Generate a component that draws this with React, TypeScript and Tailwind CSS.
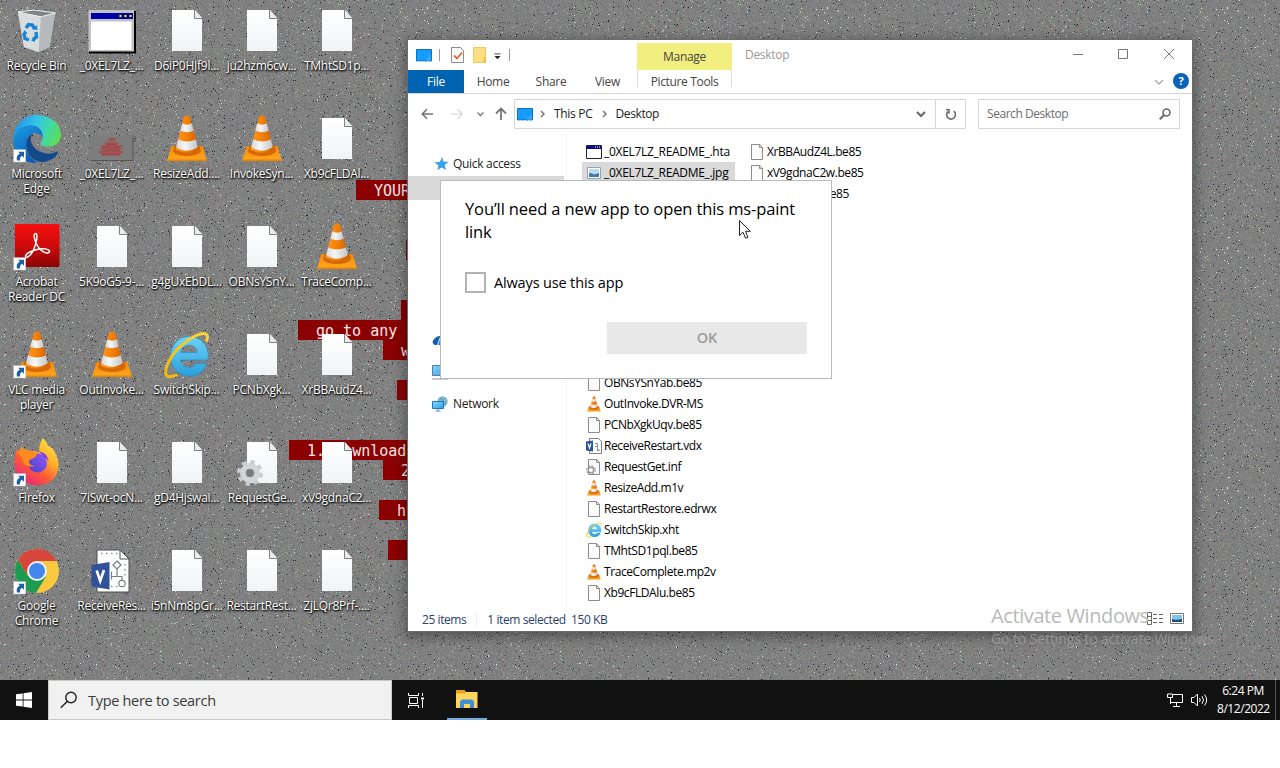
import React from "react";

type Kind = "doc" | "cone" | "hta" | "jpg" | "ie" | "visio" | "inf";

/* ---------- wallpaper ---------- */

const TILE_W = 400;
const TILE_H = 240;

function makeNoise() {
  let seed = 20220812;
  const rnd = () => {
    seed = (seed + 0x6d2b79f5) | 0;
    let t = Math.imul(seed ^ (seed >>> 15), 1 | seed);
    t = (t + Math.imul(t ^ (t >>> 7), 61 | t)) ^ t;
    return ((t ^ (t >>> 14)) >>> 0) / 4294967296;
  };
  const palette: [string, number][] = [
    ["#787878", 16000],
    ["#898989", 16000],
    ["#6c6f70", 4500],
    ["#92928e", 4500],
    ["#202026", 700],
    ["#3c3c5c", 420],
    ["#44594a", 420],
    ["#5f4444", 420],
    ["#dcdcdc", 420],
    ["#c2c296", 420],
    ["#94c0b2", 420],
    ["#b096b0", 420],
    ["#9a6262", 420],
    ["#66749f", 420],
    ["#6c9c76", 420],
  ];
  return palette.map(([color, count]) => {
    let d = "";
    for (let i = 0; i < count; i++) {
      d += `M${Math.floor(rnd() * TILE_W)} ${Math.floor(rnd() * TILE_H)}h1v1h-1z`;
    }
    return { color, d };
  });
}

const NOISE = makeNoise();

function Wallpaper() {
  return (
    <svg className="absolute inset-0" width="1280" height="680" shapeRendering="crispEdges">
      <defs>
        <pattern id="noise" width={TILE_W} height={TILE_H} patternUnits="userSpaceOnUse">
          <rect width={TILE_W} height={TILE_H} fill="#808080" />
          {NOISE.map((n) => (
            <path key={n.color} d={n.d} fill={n.color} />
          ))}
        </pattern>
      </defs>
      <rect width="1280" height="680" fill="url(#noise)" />
    </svg>
  );
}

const STRIPS: { pos: string; text: string }[] = [
  { pos: "left-[356px] top-[180px] w-[60px]", text: "YOUR" },
  { pos: "left-[406px] top-[240px] w-[10px]", text: "" },
  { pos: "left-[401px] top-[300px] w-[10px]", text: "" },
  { pos: "left-[298px] top-[320px] w-[118px]", text: "go to any d" },
  { pos: "left-[383px] top-[340px] w-[30px]", text: "w" },
  { pos: "left-[397px] top-[380px] w-[15px]", text: "" },
  { pos: "left-[289px] top-[440px] w-[125px]", text: "1. Download" },
  { pos: "left-[383px] top-[460px] w-[30px]", text: "2" },
  { pos: "left-[379px] top-[500px] w-[40px]", text: "ht" },
  { pos: "left-[388px] top-[540px] w-[30px]", text: "l" },
];

/* ---------- icons ---------- */

function Gradients() {
  return (
    <svg width="0" height="0" className="absolute">
      <defs>
        <linearGradient id="page" x1="0" y1="0" x2="0" y2="1">
          <stop offset="0" stopColor="#ffffff" />
          <stop offset="1" stopColor="#f1f3f5" />
        </linearGradient>
        <linearGradient id="orange" x1="0" x2="1">
          <stop offset="0" stopColor="#ff9a2a" />
          <stop offset=".45" stopColor="#f78408" />
          <stop offset="1" stopColor="#cf5f00" />
        </linearGradient>
        <linearGradient id="white" x1="0" x2="1">
          <stop offset="0" stopColor="#d5d8da" />
          <stop offset=".4" stopColor="#f6f8f8" />
          <stop offset="1" stopColor="#bfc4c8" />
        </linearGradient>
        <linearGradient id="base" x1="0" y1="0" x2="0" y2="1">
          <stop offset="0" stopColor="#f58a0a" />
          <stop offset="1" stopColor="#ffa621" />
        </linearGradient>
        <linearGradient id="acro" x1="0" y1="0" x2="0" y2="1">
          <stop offset="0" stopColor="#f50f0f" />
          <stop offset=".5" stopColor="#cf0a0a" />
          <stop offset="1" stopColor="#8a0505" />
        </linearGradient>
        <linearGradient id="iefill" x1="0" y1="0" x2="0" y2="1">
          <stop offset="0" stopColor="#6fd3f7" />
          <stop offset="1" stopColor="#2aa0dd" />
        </linearGradient>
        <linearGradient id="ring" x1="0" y1="1" x2="1" y2="0">
          <stop offset="0" stopColor="#f2b90c" />
          <stop offset="1" stopColor="#fbd436" />
        </linearGradient>
        <linearGradient id="edgeTop" x1="0" y1=".3" x2="1" y2=".6">
          <stop offset="0" stopColor="#1f8fdd" />
          <stop offset=".4" stopColor="#34c3ee" />
          <stop offset=".7" stopColor="#3fd8a8" />
          <stop offset="1" stopColor="#5fdc55" />
        </linearGradient>
        <linearGradient id="edgeMid" x1="0" y1="0" x2="0.6" y2="1">
          <stop offset="0" stopColor="#1b9de2" />
          <stop offset="1" stopColor="#0c59b8" />
        </linearGradient>
        <linearGradient id="fox" x1=".9" y1="0" x2=".2" y2="1">
          <stop offset="0" stopColor="#ffe84a" />
          <stop offset=".35" stopColor="#ffb52a" />
          <stop offset=".65" stopColor="#ff5a36" />
          <stop offset="1" stopColor="#e3208a" />
        </linearGradient>
        <linearGradient id="foxBlob" x1="1" y1="0" x2="0" y2="1">
          <stop offset="0" stopColor="#9059ff" />
          <stop offset="1" stopColor="#4a3fc4" />
        </linearGradient>
        <linearGradient id="screen" x1="0" y1="0" x2="1" y2="1">
          <stop offset="0" stopColor="#8bd4ff" />
          <stop offset="1" stopColor="#2f9fe8" />
        </linearGradient>
      </defs>
    </svg>
  );
}

function Page() {
  return (
    <g>
      <path d="M9 3h23l7 8v33H9z" fill="url(#page)" />
      <path d="M31.500 3v8.500h8z" fill="#e9ebec" />
      <path d="M31.500 3v8.500h8" fill="none" stroke="#7d8082" strokeWidth="1" />
    </g>
  );
}

function Cone() {
  return (
    <g>
      <path d="M8.500 31h31l4.500 15H4z" fill="url(#base)" />
      <path d="M4 44.600h40l.3 1.500H3.700z" fill="#e88600" />
      <path d="M10 36.500C14 42.500 34 42.500 38 36.500L36.500 30.500h-25z" fill="#c85a00" opacity=".75" />
      <path d="M21 1.500Q24 -.5 27 1.500L35.500 34.500Q24 41 12.500 34.500z" fill="url(#orange)" />
      <path d="M19.200 8.600Q24 10.800 28.800 8.600L30.700 15.800Q24 18.600 17.300 15.800z" fill="url(#white)" />
      <path d="M15.200 24.500Q24 28.500 32.800 24.500L34.800 32Q24 39.500 13.200 32z" fill="url(#white)" />
    </g>
  );
}

function IE() {
  return (
    <g>
      <path
        d="M25.500 5.500C15.500 5.500 7.500 14 7.500 25S15 45 26 45c9 0 15-4.500 17.700-12.500H32.700c-1.200 2.600-3.500 4-6.500 4-4.800 0-8-2.900-8.400-7.500H45.300C46.500 14.500 38 5.500 25.500 5.500zM17.800 21.500c.9-4.400 3.900-7.200 8.400-7.200 4.600 0 7.500 2.700 8.100 7.200z"
        fill="url(#iefill)"
        stroke="#1d8fce"
        strokeWidth=".6"
      />
      <path
        d="M14.500 43.500C9 46.500 4 46.500 3 43.500 1 37 8.500 22.500 19.500 13.500 28.500 5.500 40 .5 43.500 3.500c1.700 1.600.8 4.500-.5 7"
        fill="none"
        stroke="url(#ring)"
        strokeWidth="3"
      />
    </g>
  );
}

function Visio() {
  return (
    <g>
      <path d="M9 3h23l9 9v33H9z" fill="#fff" stroke="#4a4f55" strokeWidth="1" />
      <path d="M32 3v9h9z" fill="#fff" stroke="#4a4f55" strokeWidth="1" />
      <path
        d="M13 6.500h17M23 39.500h8M37 17v15"
        stroke="#8d929b"
        strokeWidth="1.500"
        strokeDasharray="1.500 3.500"
      />
      <path d="M29 14l4 4-4 4-4-4zM29 22v7M23.500 24.500v8M23.500 29.500H34v4" fill="none" stroke="#777d86" strokeWidth="1.200" />
      <circle cx="34" cy="36.500" r="3.200" fill="#fff" stroke="#777d86" strokeWidth="1.200" />
      <path d="M3.500 18L21.500 15v27.500L3.500 39.500z" fill="#2f529b" />
      <path d="M8.700 23.500l3.500 10.500 3.800-11" fill="none" stroke="#fff" strokeWidth="2.600" />
    </g>
  );
}

function Gear() {
  return (
    <g>
      <circle cx="12" cy="34" r="7" fill="none" stroke="#d3d6d9" strokeWidth="6" />
      <circle cx="12" cy="34" r="11" fill="none" stroke="#c9cdd0" strokeWidth="4" strokeDasharray="4.320 4.320" />
      <circle cx="12" cy="34" r="4" fill="#77797b" stroke="#8a9096" strokeWidth="1" />
    </g>
  );
}

function Shortcut() {
  return (
    <g>
      <rect x=".7" y="34.700" width="12" height="12.300" fill="#fff" stroke="#c9c9c9" strokeWidth=".5" />
      <path d="M5 36.700h6v6l-2-2c-1.600 1-2.300 2.600-1.900 4.800H4c-1-3.200.2-5.700 2.900-7z" fill="#1f5fa8" />
    </g>
  );
}

function Hta() {
  return (
    <g>
      <path d="M1 4h47v42.500H1z" fill="#000" />
      <path d="M.5 3h45.500v41.500H.5z" fill="#c3c3c3" />
      <path d="M3 6h42v6H3z" fill="#0000a8" />
      <path d="M31 7.500h3v3h-3zM36 7.500h3v3h-3zM41 7.500h3v3h-3z" fill="#d6d6d6" stroke="#000" strokeWidth=".7" />
      <path d="M3 14.500h40.500V43H3z" fill="#fff" />
    </g>
  );
}

function Thumb() {
  return (
    <g>
      <path d="M3 21.500h42.500V46H3z" fill="#555" />
      <path d="M2.500 21h42v24h-42z" fill="#7d7d7d" />
      <path d="M20 25h8M17 28h13M13.500 31h21M12.500 34h21M10.500 37h25M14 40h18" stroke="#a4494b" strokeWidth="1.500" />
      <path d="M22 23.500h5M18 29.500h11M15 35.500h17M13 38.500h20M14 32.500h18" stroke="#ad4043" strokeWidth="1" />
    </g>
  );
}

function Bin() {
  return (
    <g>
      <path d="M5 5l23 4.500L42 6l-5.500 34L25.500 45 11 40z" fill="#cfd3d5" />
      <path d="M5 5l23 4.500-2.500 35.500L11 40z" fill="#d9dcdd" />
      <path d="M28 9.500L42.500 6 36.500 40l-11 5z" fill="#b6babd" />
      <path d="M5 5l16-2 21.500 3L28 9.800z" fill="#7e8385" stroke="#eef0f1" strokeWidth="1" />
      <path
        d="M13 21l2.500-3.500 4 .5 2 4M23 25l.5 5-3.500 2.500M16 33l-4-1.500-1-5"
        fill="none"
        stroke="#1784d8"
        strokeWidth="3.400"
      />
      <path d="M19 22l5.500 1-.5-5zM21.500 29.500l-3.500 4 4 1.500zM9 28l2.500-5 3 3.500z" fill="#1784d8" />
    </g>
  );
}

function Edge() {
  return (
    <g>
      <path d="M.3 24C1 10 11-.3 24 0c14 .3 24 9 24 19.500 0 8-6 12.300-12.500 12.300-5 0-8.200-1.600-8-3.700.1-1 2.400-2 2.400-5.300C29.900 17 24 13 17.500 13 9 13 2.500 17 .3 24z" fill="url(#edgeTop)" />
      <path d="M.3 24C2 14.500 10.500 9.500 19 10.300c7 .7 11.300 6 10.800 12-2-3-5.800-5-9.500-4-5.500 1.600-7.800 7-7 13C14.500 40 20 45.500 25 47.700 11 49-.8 38 .3 24z" fill="url(#edgeMid)" />
      <path d="M20.300 18.300C15 20.500 12.500 26 13.300 31.500c1.300 9.500 9 16 17 15.500 6.700-.5 12-4.500 14.500-9 .8-1.400-.6-1.700-1.500-1.200-3 1.600-6.500 2.400-10 1.800-8.500-1.200-14.500-6.800-15.500-13-.4-3 .5-5.600 2.500-7.300z" fill="#114a8b" />
    </g>
  );
}

function Acrobat() {
  return (
    <g>
      <path d="M2 1h44.500v43H2z" fill="url(#acro)" />
      <path
        d="M22.700 10.500c-2.600 0-1.700 6 1.300 11.500 3.200 5.800 8 8.800 11.200 7.700 3.200-1.200.3-4.200-6-3.900C22.500 26.200 13 29.500 12.500 33.300c-.3 2.800 4.200 1 7.800-6C23.500 20.500 25.300 10.500 22.700 10.500z"
        fill="none"
        stroke="#fff"
        strokeWidth="1.500"
      />
    </g>
  );
}

function Firefox() {
  return (
    <g>
      <path
        d="M30-.7c2.500 2 4 4.500 5 7.500 4 1.500 6 4 7.500 8C45 19.500 46.500 24 45 31 43 40.500 34.500 46.300 24.500 46.300 12 46.300 1.500 37.500 1.300 24.500 1.200 19 3 14 3.500 10.500L6 13 8.500 7.500c2 2.500 5 4 8.500 4l9.500 1.500C25.500 7.500 27.500 2.500 30-.7z"
        fill="url(#fox)"
      />
      <circle cx="24.500" cy="24" r="9.500" fill="url(#foxBlob)" />
      <path d="M3.500 10.500L6 13 8.500 7.500c2.500 3 5.500 4.300 9 4.500 4.500.3 6.500 2.500 6 4.500-1.500 3.500-7.500 3-7.500 6.500 0 2.500 3 3.500 6 4-4 1.500-11 .5-12.500-6C8.500 16 4 14.500 3.500 10.500z" fill="#ff8a1f" />
      <path d="M24 12.500c6 0 11 3 11.500 10-1.500-3-3.500-4-5-4.500-1-3-3.500-4.500-6.500-5.500z" fill="#7a3fe0" />
    </g>
  );
}

function Chrome() {
  return (
    <g>
      <circle cx="24" cy="24" r="22" fill="#fbc840" />
      <path d="M4.950 13A22 22 0 0 1 43.500 14H24L15 29z" fill="#d8453a" />
      <path d="M4.950 13A22 22 0 0 0 23 46L33 29.500 24 30 15 29z" fill="#1d9b52" />
      <circle cx="24" cy="24" r="10" fill="#f3f3f3" />
      <circle cx="24" cy="24" r="8" fill="#4286ee" />
    </g>
  );
}

const BIG: Record<string, React.ReactNode> = {
  bin: <Bin />,
  doc: <Page />,
  cone: <Cone />,
  hta: <Hta />,
  thumb: <Thumb />,
  edge: <Edge />,
  acrobat: <Acrobat />,
  ie: <IE />,
  visio: <Visio />,
  firefox: <Firefox />,
  chrome: <Chrome />,
  inf: (
    <g>
      <Page />
      <Gear />
    </g>
  ),
};

interface DeskItem {
  icon: string;
  label: string;
  link?: boolean;
}

const DESK: DeskItem[] = [
  { icon: "bin", label: "Recycle Bin" },
  { icon: "hta", label: "_0XEL7LZ_..." },
  { icon: "doc", label: "D6iP0HJf9l..." },
  { icon: "doc", label: "ju2hzm6cw..." },
  { icon: "doc", label: "TMhtSD1p..." },
  { icon: "edge", label: "Microsoft\nEdge", link: true },
  { icon: "thumb", label: "_0XEL7LZ_..." },
  { icon: "cone", label: "ResizeAdd...." },
  { icon: "cone", label: "InvokeSyn..." },
  { icon: "doc", label: "Xb9cFLDAl..." },
  { icon: "acrobat", label: "Acrobat\nReader DC", link: true },
  { icon: "doc", label: "5K9oG5-9-..." },
  { icon: "doc", label: "g4gUxEbDL..." },
  { icon: "doc", label: "OBNsYSnY..." },
  { icon: "cone", label: "TraceComp..." },
  { icon: "cone", label: "VLC media\nplayer", link: true },
  { icon: "cone", label: "OutInvoke..." },
  { icon: "ie", label: "SwitchSkip..." },
  { icon: "doc", label: "PCNbXgk..." },
  { icon: "doc", label: "XrBBAudZ4..." },
  { icon: "firefox", label: "Firefox", link: true },
  { icon: "doc", label: "7iSwt-ocN..." },
  { icon: "doc", label: "gD4Hjswai..." },
  { icon: "inf", label: "RequestGe..." },
  { icon: "doc", label: "xV9gdnaC2..." },
  { icon: "chrome", label: "Google\nChrome", link: true },
  { icon: "visio", label: "ReceiveRes..." },
  { icon: "doc", label: "i5nNm8pGr..." },
  { icon: "doc", label: "RestartRest..." },
  { icon: "doc", label: "ZjLQr8Prf-...." },
];

function DesktopIcon({ item }: { item: DeskItem }) {
  return (
    <div className="flex h-[108px] w-[75px] flex-col items-center">
      <svg className="-ml-px h-12 w-12 shrink-0 overflow-visible" viewBox="0 0 48 48">
        {BIG[item.icon]}
        {item.link && <Shortcut />}
      </svg>
      <div className="mt-[3px] -ml-[2px] text-center text-[12px] leading-[15px] tracking-[-0.25px] whitespace-pre text-white [text-shadow:1px_1px_2px_#000,0_1px_2px_#000]">
        {item.label}
      </div>
    </div>
  );
}

function SmallIcon({ kind }: { kind: Kind }) {
  if (kind === "doc")
    return (
      <svg width="16" height="16" viewBox="0 0 16 16" className="shrink-0">
        <path d="M2.500.5h8l3 3v12h-11z" fill="#fcfcfc" stroke="#8c8c8c" />
        <path d="M10.500.5v3h3" fill="none" stroke="#8c8c8c" />
      </svg>
    );
  if (kind === "hta")
    return (
      <svg width="16" height="16" viewBox="0 0 16 16" className="shrink-0">
        <path d="M.5 1.500h15v13H.5z" fill="#fff" stroke="#222" />
        <path d="M1 2h14v3H1z" fill="#0a0a9a" />
        <path d="M9 3h1M11 3h1M13 3h1" stroke="#fff" />
      </svg>
    );
  if (kind === "jpg")
    return (
      <svg width="16" height="16" viewBox="0 0 16 16" className="shrink-0">
        <path d="M1.500 2.500h13v11h-13z" fill="#fff" stroke="#8fa3b3" />
        <path d="M3 4h10v8H3z" fill="#b9dcf0" />
        <path d="M3 8.500l2-.5 3 1.500 5-1.500v4H3z" fill="#3f7ba8" />
      </svg>
    );
  if (kind === "inf")
    return (
      <svg width="16" height="16" viewBox="0 0 16 16" className="shrink-0">
        <path d="M2.500.5h8l3 3v12h-11z" fill="#fcfcfc" stroke="#8c8c8c" />
        <path d="M10.500.5v3h3" fill="none" stroke="#8c8c8c" />
        <circle cx="5" cy="11" r="2.700" fill="#fff" stroke="#999" strokeWidth="1.400" />
        <circle cx="5" cy="11" r="4.200" fill="none" stroke="#999" strokeWidth="1.400" strokeDasharray="1.600 1.700" />
      </svg>
    );
  if (kind === "visio")
    return (
      <svg width="16" height="16" viewBox="0 0 16 16" className="shrink-0">
        <path d="M3.500.5h9l3 3v12h-12z" fill="#fff" stroke="#7b8087" />
        <path d="M9 5.500h2.500v3H9M11.500 8.500V12H14M11 12.500h2" fill="none" stroke="#8a9099" />
        <path d="M0 3.500L7 2.500v11L0 12.500z" fill="#2f529b" />
        <path d="M2 5.500l1.500 4.500L5 5.500" fill="none" stroke="#fff" strokeWidth="1.200" />
      </svg>
    );
  return (
    <svg width="16" height="16" viewBox="0 0 48 48" className="shrink-0">
      {kind === "cone" ? <Cone /> : <IE />}
    </svg>
  );
}

function Monitor() {
  return (
    <svg width="16" height="13" viewBox="0 0 16 13" className="shrink-0">
      <path d="M.5.5h15v11.500H.5z" fill="#189cff" stroke="#0c6fbd" />
      <path d="M2 12.500h3M6 12.500h3M11 12.500h2" stroke="#bfe0f6" />
      <path d="M9.500 11.500l5.500-6v6z" fill="#35adff" />
    </svg>
  );
}

/* ---------- explorer window ---------- */

const COL1: { kind: Kind; name: string; selected?: boolean }[] = [
  { kind: "hta", name: "_0XEL7LZ_README_.hta" },
  { kind: "jpg", name: "_0XEL7LZ_README_.jpg", selected: true },
];
const COL1_REST: { kind: Kind; name: string }[] = [
  { kind: "doc", name: "OBNsYSnYab.be85" },
  { kind: "cone", name: "OutInvoke.DVR-MS" },
  { kind: "doc", name: "PCNbXgkUqv.be85" },
  { kind: "visio", name: "ReceiveRestart.vdx" },
  { kind: "inf", name: "RequestGet.inf" },
  { kind: "cone", name: "ResizeAdd.m1v" },
  { kind: "doc", name: "RestartRestore.edrwx" },
  { kind: "ie", name: "SwitchSkip.xht" },
  { kind: "doc", name: "TMhtSD1pql.be85" },
  { kind: "cone", name: "TraceComplete.mp2v" },
  { kind: "doc", name: "Xb9cFLDAlu.be85" },
];
const COL2: { kind: Kind; name: string }[] = [
  { kind: "doc", name: "XrBBAudZ4L.be85" },
  { kind: "doc", name: "xV9gdnaC2w.be85" },
  { kind: "doc", name: "ZjLQr8Prf-.be85" },
];

function FileRow({ kind, name, selected }: { kind: Kind; name: string; selected?: boolean }) {
  return (
    <div
      className={
        selected
          ? "flex h-[21px] w-[153px] items-center gap-[2px] bg-[#d9d9d9] pl-1"
          : "flex h-[21px] w-[153px] items-center gap-[2px] pl-1"
      }
    >
      <SmallIcon kind={kind} />
      <span
        className={
          name.startsWith("_")
            ? "whitespace-nowrap tracking-[-0.3px]"
            : "whitespace-nowrap tracking-[-0.42px]"
        }
      >
        {name}
      </span>
    </div>
  );
}

function TitleBar() {
  return (
    <div className="flex h-[30px] items-start">
      <div className="flex h-[30px] w-[229px] items-center pl-2">
        <Monitor />
        <div className="ml-[7px] h-3 w-px bg-[#999]" />
        <svg width="13" height="16" viewBox="0 0 13 16" className="ml-[11px]">
          <path d="M.5.5h9l3 3v12H.5z" fill="#fff" stroke="#8b8b8b" />
          <path d="M3 8.500l3 3 5-6" fill="none" stroke="#e0692b" strokeWidth="1.800" />
        </svg>
        <svg width="14" height="16" viewBox="0 0 14 16" className="ml-[9px]">
          <path d="M.5.5h12v15H.5z" fill="#fddf83" stroke="#efc95c" />
          <path d="M10.500 15.500v-5l2-1.500v6.500z" fill="#f0bf45" />
        </svg>
        <svg width="7" height="7" viewBox="0 0 8 7" className="ml-[7px] mt-[3px]">
          <path d="M.5.5h7" stroke="#333" />
          <path d="M.5 3h7L4 6.500z" fill="#222" />
        </svg>
        <div className="ml-[8px] h-3 w-px bg-[#999]" />
      </div>
      <div className="mt-[3px] flex h-[27px] w-[95px] items-center justify-center bg-[#f1ef80] pt-px text-[#444]">
        Manage
      </div>
      <div className="ml-[13px] flex h-[30px] grow items-center text-[#999]">Desktop</div>
      <svg width="110" height="30" viewBox="0 0 110 30" className="mr-4" fill="none" stroke="#777">
        <path d="M7 14.500h10" />
        <path d="M52.500 9.500h9v9h-9z" />
        <path d="M98 9l10 10M108 9l-10 10" />
      </svg>
    </div>
  );
}

function Tabs() {
  return (
    <div className="flex h-6 items-stretch border-b border-[#d6d6d6] text-[#444]">
      <div className="flex w-14 items-center justify-center bg-[#0063b1] pt-px text-white">File</div>
      <div className="flex w-[58px] items-center justify-center pt-px">Home</div>
      <div className="flex w-[58px] items-center justify-center pt-px">Share</div>
      <div className="flex w-[57px] items-center justify-center pt-px pr-[2px]">View</div>
      <div className="flex h-[17px] w-[95px] shrink-0 items-center justify-center self-start border-x border-[#ddd] whitespace-nowrap">
        <span className="pt-[7px] tracking-[-0.35px]">Picture Tools</span>
      </div>
      <div className="grow" />
      <div className="flex items-center gap-[9px] pr-[3px]">
        <svg width="10" height="6" viewBox="0 0 10 6" fill="none" stroke="#aaa" strokeWidth="1.400">
          <path d="M1 1l4 4 4-4" />
        </svg>
        <div className="-mt-px flex h-4 w-4 items-center justify-center rounded-full bg-[#0a63b8] text-[11px] font-bold text-white">
          ?
        </div>
      </div>
    </div>
  );
}

function AddressBar() {
  return (
    <div className="flex h-10 items-center pl-[13px] text-[#222]">
      <svg width="90" height="20" viewBox="0 0 90 20" fill="none" strokeWidth="1.600">
        <path d="M12 10H1.500M6 5.200L1.200 10 6 14.800" stroke="#767676" />
        <path d="M30 10h11M36.500 5.200L41.300 10l-4.800 4.800" stroke="#d4d4d4" strokeWidth="1.200" />
        <path d="M56.500 8.500l3 3 3-3" stroke="#888" />
        <path d="M80 16V4.500M75 9.500l5-5 5 5" stroke="#767676" strokeWidth="1.800" />
      </svg>
      <div className="ml-[3px] flex h-[30px] w-[452px] items-stretch border border-[#d6d6d6]">
        <div className="flex grow items-center pl-[2px]">
          <Monitor />
          <svg width="5" height="8" viewBox="0 0 5 8" className="ml-[7px]" fill="none" stroke="#777" strokeWidth="1.500">
            <path d="M1 1l3 3-3 3" />
          </svg>
          <span className="ml-[9px]">This PC</span>
          <svg width="5" height="8" viewBox="0 0 5 8" className="ml-[9px]" fill="none" stroke="#777" strokeWidth="1.500">
            <path d="M1 1l3 3-3 3" />
          </svg>
          <span className="ml-[9px] grow tracking-[-0.4px]">Desktop</span>
          <svg width="10" height="7" viewBox="0 0 10 7" className="mr-[9px]" fill="none" stroke="#666" strokeWidth="2">
            <path d="M1 1l4 4 4-4" />
          </svg>
        </div>
        <div className="flex w-[30px] items-center justify-center border-l border-[#d6d6d6]">
          <svg width="12" height="13" viewBox="0 0 12 13" fill="none" stroke="#6a6a6a" strokeWidth="1.600">
            <path d="M8.700 3.200A4.400 4.400 0 1 1 3 3.500" />
            <path d="M1 1.500l3 .3-.2 4" />
          </svg>
        </div>
      </div>
      <div className="ml-3 flex h-[30px] w-[202px] items-center border border-[#d6d6d6] pr-2 pl-2 tracking-[-0.45px] text-[#6d6d6d]">
        <span className="grow">Search Desktop</span>
        <svg width="12" height="12" viewBox="0 0 12 12" fill="none" stroke="#666" strokeWidth="1.600">
          <circle cx="7.500" cy="4.500" r="3.500" />
          <path d="M5 7L.8 11.200" strokeWidth="2" />
        </svg>
      </div>
    </div>
  );
}

function NavPane() {
  return (
    <div className="flex w-[159px] flex-col border-r border-[#f4f4f4] text-[#222]">
      <div className="mt-[18px] flex h-6 items-center pl-[26px]">
        <svg width="15" height="14" viewBox="0 0 16 15">
          <path d="M8.500 0l1.800 5 5.200.2-4 3.500 1.300 5.300-4.500-2.800L3.500 14l1.300-5L.5 5.700l5.700-.3z" fill="#3aa0e8" />
        </svg>
        <span className="ml-1">Quick access</span>
      </div>
      <div className="h-6 w-[156px] bg-[#d9d9d9]" />
      <div className="mt-[128px] flex h-6 items-center pl-6">
        <svg width="16" height="10" viewBox="0 0 16 10">
          <path d="M3 10a3 3 0 0 1-1-5.500Q4 1 8 1v1L5 10z" fill="#0f5fb0" />
          <path d="M6 10L8.500 3 13 3a3.500 3.500 0 0 1 0 7z" fill="#1a82dc" />
        </svg>
      </div>
      <div className="mt-2 flex h-6 items-center pl-6">
        <svg width="16" height="16" viewBox="0 0 16 16">
          <path d="M.5 1.500h15v10H.5z" fill="url(#screen)" stroke="#5a7f9b" />
          <path d="M0 15h16" stroke="#8b979f" />
        </svg>
      </div>
      <div className="mt-2 flex h-6 items-center pl-6">
        <svg width="16" height="16" viewBox="0 0 16 16">
          <circle cx="10.500" cy="5.500" r="5.200" fill="#7fb6cf" />
          <path d="M8 2l3 2-1 2 4 2" stroke="#5f97a3" fill="none" />
          <path d="M.5 5.500h11v7H.5z" fill="url(#screen)" stroke="#1878b8" />
          <path d="M3.500 15h5M6 13v2" stroke="#4d93bf" />
        </svg>
        <span className="ml-[5px]">Network</span>
      </div>
    </div>
  );
}

function Explorer() {
  return (
    <div className="absolute top-[40px] left-[408px] flex h-[591px] w-[784px] flex-col bg-white text-[12px] leading-4 tracking-[-0.3px] shadow-[0_0_0_1px_#6b6b6b,0_3px_12px_3px_rgba(0,0,0,0.35)]">
      <TitleBar />
      <Tabs />
      <AddressBar />
      <div className="flex grow">
        <NavPane />
        <div className="mt-[7px] ml-[15px] flex gap-[11px] text-black">
          <div>
            {COL1.map((f) => (
              <FileRow key={f.name} {...f} />
            ))}
            <div className="h-[189px]" />
            {COL1_REST.map((f) => (
              <FileRow key={f.name} {...f} />
            ))}
          </div>
          <div className="-ml-px">
            {COL2.map((f) => (
              <FileRow key={f.name} {...f} />
            ))}
          </div>
        </div>
      </div>
      <div className="flex h-[22px] shrink-0 items-center pr-[8px] pl-[14px] tracking-[-0.42px] text-[#28406b]">
        <span>25 items</span>
        <div className="ml-[10px] h-3 w-px bg-[#eee]" />
        <span className="ml-[10px]">1 item selected&nbsp; 150 KB</span>
        <div className="grow" />
        <svg width="16" height="13" viewBox="0 0 16 13" fill="none" stroke="#666" className="-mt-[3px]">
          <path d="M.5.5h4v12h-4zM.5 4.500h4M.5 8.500h4" />
          <path d="M6 2.500h4M12 2.500h4M6 6.500h4M12 6.500h4M6 10.500h4M12 10.500h4" />
        </svg>
        <svg width="14" height="11" viewBox="0 0 14 11" className="-mt-[3px] ml-[7px]">
          <path d="M.5.5h13v10H.5z" fill="#fff" stroke="#777" />
          <path d="M2 2h10v7H2z" fill="#7fc3ee" />
          <path d="M2 6l4 1 6-1v3H2z" fill="#1e4e79" />
        </svg>
      </div>
    </div>
  );
}

function Dialog() {
  return (
    <div className="absolute top-[180px] left-[440px] flex h-[199px] w-[392px] flex-col border border-[#b9b9bb] bg-white px-6 text-black">
      <div className="mt-[16px] text-[16.5px] leading-[23px] tracking-[-0.12px] whitespace-nowrap">
        You’ll need a new app to open this ms-paint
        <br />
        link
      </div>
      <div className="mt-[29px] flex items-center gap-2 text-[14.5px] leading-[21px] tracking-[-0.15px]">
        <div className="h-[21px] w-[21px] border-2 border-[#b3b3b3]" />
        Always use this app
      </div>
      <div className="mt-[29px] flex h-8 w-[200px] items-center justify-center self-end bg-[#e8e8e8] text-[14.5px] font-semibold text-[#9b9b9b]">
        OK
      </div>
    </div>
  );
}

function Taskbar() {
  return (
    <div className="flex h-10 w-[1280px] items-stretch bg-[#111111] text-white">
      <div className="flex w-12 items-center justify-center">
        <svg width="16" height="16" viewBox="0 0 16 16" fill="#fff">
          <path d="M0 2.300L6.700 1.400v6.200H0zM7.500 1.300L16 0v7.600H7.500zM0 8.400h6.700v6.200L0 13.700zM7.500 8.400H16V16l-8.500-1.200z" />
        </svg>
      </div>
      <div className="flex w-[344px] items-center border border-[#c9c9c9] bg-[#f1f1f1] pl-[11px] text-[14.5px] tracking-[-0.3px] text-[#3a3a3a]">
        <svg width="18" height="18" viewBox="0 0 18 18" fill="none" stroke="#222" strokeWidth="1.400">
          <circle cx="11" cy="6.500" r="5.200" />
          <path d="M7.300 10.200L.8 16.700" />
        </svg>
        <span className="ml-[10px] pt-px">Type here to search</span>
      </div>
      <div className="flex w-[47px] items-center justify-center">
        <svg width="16" height="15" viewBox="0 0 16 15" fill="none" stroke="#fff">
          <path d="M.5 0v2.500h10V0M.5 15v-2.500h10V15M1.500 4.500h8v6h-8zM14.500 0v3M14.500 7v8" />
          <path d="M13 4.500h3v2h-3z" fill="#fff" stroke="none" />
        </svg>
      </div>
      <div className="ml-2 flex w-10 flex-col items-center">
        <div className="flex h-[38px] items-center">
          <svg width="22" height="18" viewBox="0 0 22 18">
            <path d="M0 0h8l2 2h11.500v16H0z" fill="#ffd45e" />
            <path d="M0 0h8l2 2-1 1.500H0z" fill="#e5a51b" />
            <path d="M4 18v-6.500L6 9.500h10l2 2V18h-4v-4H8v4z" fill="#3d8fd6" />
          </svg>
        </div>
        <div className="h-[2px] w-10 bg-[#76a9dc]" />
      </div>
      <div className="grow" />
      <div className="flex items-center">
        <svg width="17" height="15" viewBox="0 0 17 15" fill="none" stroke="#fff">
          <path d="M6 1.500h9.500v8H3.500M3.500 5v6M9.500 10v3.500M6 13.500h7M.5 1h5v3.500h-5z" />
        </svg>
        <svg width="17" height="14" viewBox="0 0 17 14" className="ml-[7px]" fill="none" stroke="#fff">
          <path d="M.5 4.500H3l3.500-3.500v12L3 9.500H.5zM8.500 5q1.500 2 0 4M11 3.200q3 3.800 0 7.600M13.500 1.500q4.300 5.500 0 11" />
        </svg>
        <div className="ml-[9px] w-[52px] text-center text-[12px] leading-[18px] tracking-[-0.45px] whitespace-nowrap">
          6:24 PM
          <br />
          8/12/2022
        </div>
        <div className="ml-[6px] h-10 w-px bg-[#555]" />
        <div className="w-1" />
      </div>
    </div>
  );
}

export default function App() {
  return (
    <div className="h-[768px] w-[1280px] overflow-hidden bg-white font-['Open_Sans','Noto_Sans',sans-serif]">
      <Gradients />
      <div className="relative h-[680px] w-[1280px] overflow-hidden bg-[#808080]">
        <Wallpaper />
        {STRIPS.map((s) => (
          <div
            key={s.pos}
            className={`absolute h-5 overflow-hidden bg-[#8b0000] pl-[18px] font-['DejaVu_Sans_Mono',monospace] text-[15px] leading-[22px] whitespace-pre text-[#f6e8e8] ${s.pos}`}
          >
            {s.text}
          </div>
        ))}
        <div className="relative grid w-[375px] grid-cols-5 pt-[7px]">
          {DESK.map((item, i) => (
            <DesktopIcon key={i} item={item} />
          ))}
        </div>
        <Explorer />
        <div className="absolute top-[604px] left-[991px] text-[20px] leading-6 tracking-[-0.4px] whitespace-nowrap text-[#b9b9b9]">
          Activate Windows
        </div>
        <div className="absolute top-[629px] left-[991px] text-[14px] leading-5 tracking-[-0.1px] whitespace-nowrap text-[#a6a6a6]/70">
          Go to Settings to activate Windows.
        </div>
        <Dialog />
        <svg className="absolute top-[219px] left-[738px]" width="14" height="21" viewBox="0 0 14 21">
          <path d="M1.500 1.500v15l3.500-3.300 2.600 6 2.400-1-2.500-5.900h4.800z" fill="#fff" stroke="#222" />
        </svg>
      </div>
      <Taskbar />
    </div>
  );
}
